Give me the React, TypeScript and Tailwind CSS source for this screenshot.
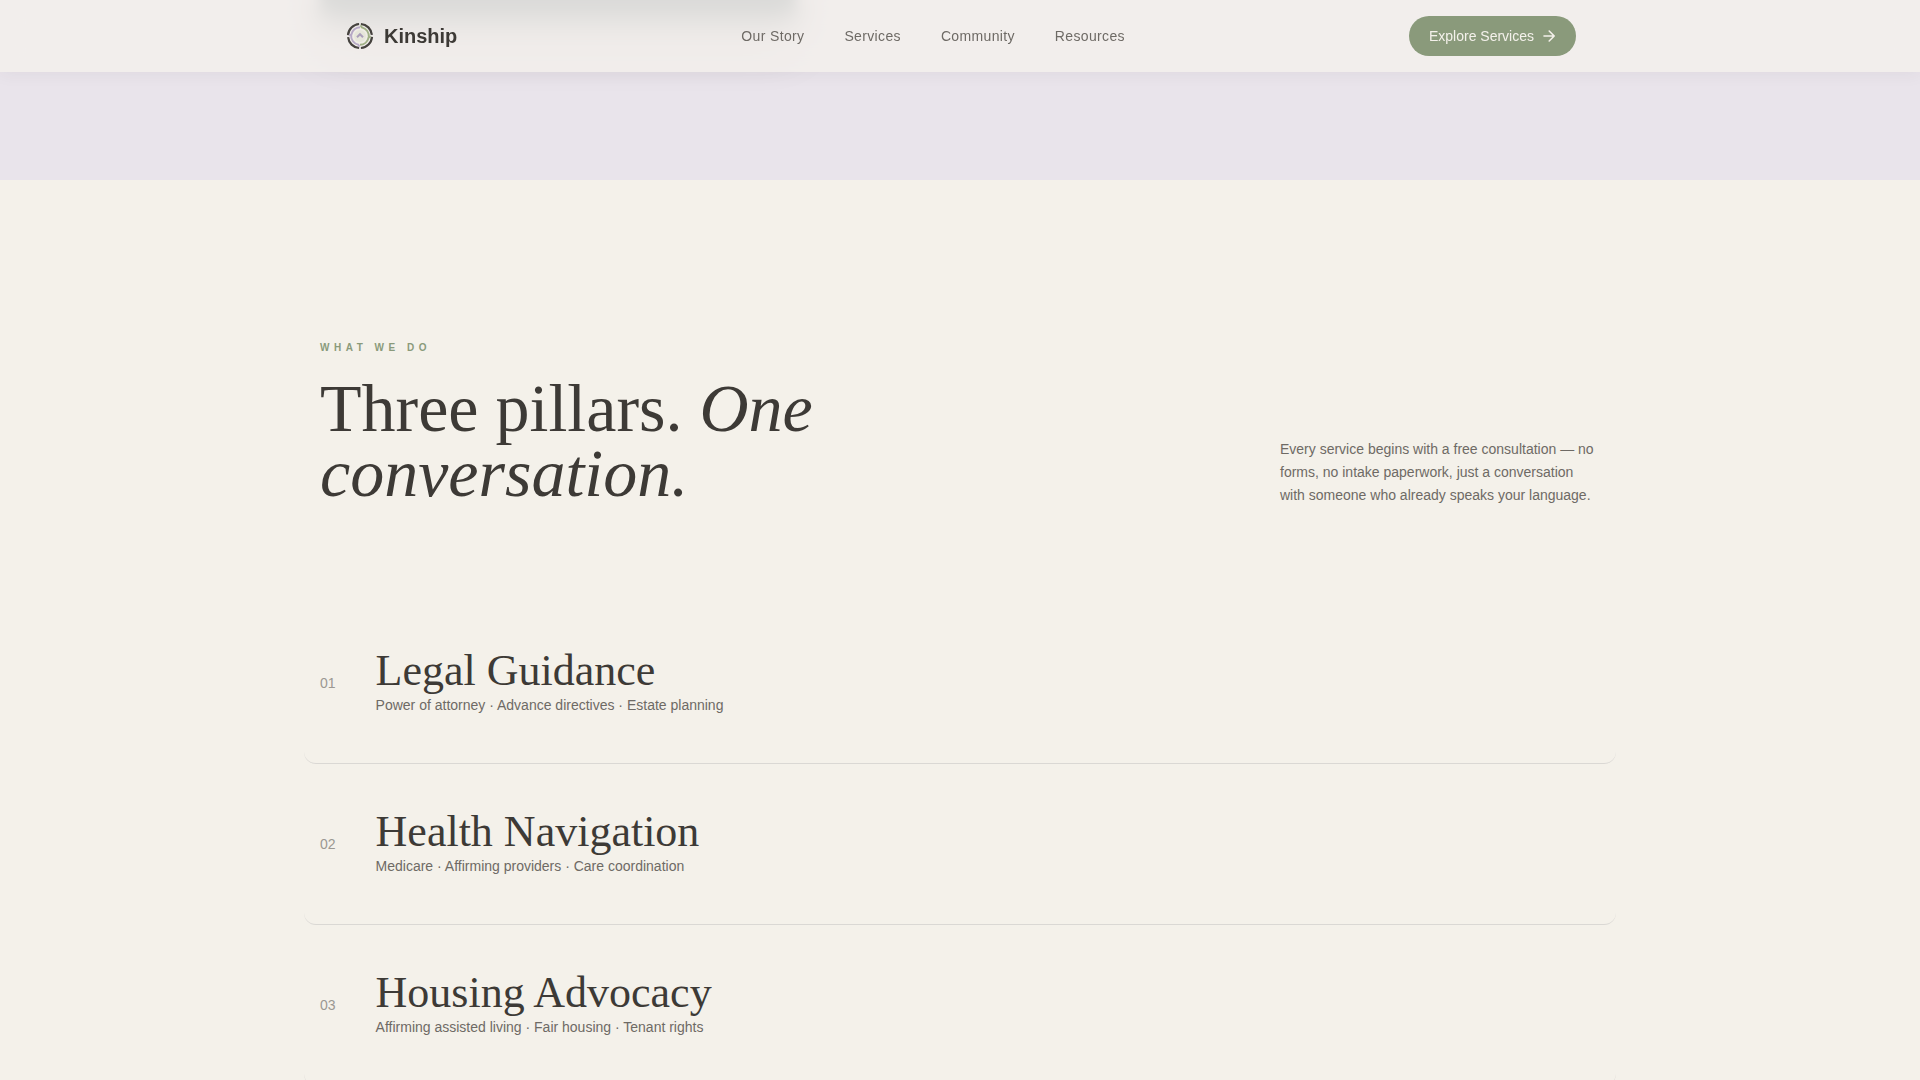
const navLinks = ['Our Story', 'Services', 'Community', 'Resources']

const services = [
  { num: '01', title: 'Legal Guidance', detail: 'Power of attorney · Advance directives · Estate planning' },
  { num: '02', title: 'Health Navigation', detail: 'Medicare · Affirming providers · Care coordination' },
  { num: '03', title: 'Housing Advocacy', detail: 'Affirming assisted living · Fair housing · Tenant rights' },
]

function Logo() {
  return (
    <svg viewBox="0 0 32 32" className="size-8" fill="none" aria-hidden="true">
      <circle cx="16" cy="16" r="10" fill="#efede5" />
      <g stroke="#45423e" strokeWidth="2.2">
        <path d="M16.9 4A12 12 0 0 1 27.9 14.8" />
        <path d="M28 16.9A12 12 0 0 1 16.9 28" />
        <path d="M15.1 28A12 12 0 0 1 4.1 17.2" />
        <path d="M4 15.1A12 12 0 0 1 15.1 4" />
      </g>
      <path d="M15.4 26.8l-1.2-2.2A9 9 0 0 1 7.2 14.6M5.2 15.6l2.3-1.3A9 9 0 0 1 16 7.2" stroke="#b7a9c6" strokeWidth="1.9" />
      <path d="M16.6 5.2l1.2 2.2A9 9 0 0 1 24.8 17.4M26.8 16.4l-2.3 1.3A9 9 0 0 1 16 24.8" stroke="#a0b086" strokeWidth="1.9" />
      <circle cx="16" cy="16" r="6" fill="#e6e6da" />
      <path d="M13 17.2l3-3 3 3" stroke="#ab9fba" strokeWidth="2" />
    </svg>
  )
}

function Arrow() {
  return (
    <svg
      viewBox="0 0 14 14"
      className="size-3.5"
      fill="none"
      stroke="currentColor"
      strokeWidth="1.6"
      strokeLinecap="round"
      strokeLinejoin="round"
      aria-hidden="true"
    >
      <path d="M2 7h10.2M7.2 2l5 5-5 5" />
    </svg>
  )
}

function Header() {
  return (
    <header className="fixed inset-x-0 top-0 z-10 bg-[#f3f0ec]/85 shadow-[0_2px_16px_rgba(61,58,54,0.06)] backdrop-blur-md">
      <div className="mx-auto flex h-18 max-w-7xl items-center justify-between px-6">
        <a href="#" className="flex items-center gap-2">
          <Logo />
          <span className="text-xl font-bold">Kinship</span>
        </a>
        <nav className="flex gap-10">
          {navLinks.map((link) => (
            <a key={link} href="#" className="text-sm tracking-wide text-[#6e6a65]">{link}</a>
          ))}
        </nav>
        <button className="flex h-10 items-center gap-2 rounded-full bg-[#8a9a7b] px-5 text-sm text-[#f4f1eb]">
          Explore Services
          <Arrow />
        </button>
      </div>
    </header>
  )
}

function ServiceRow({ num, title, detail }: { num: string; title: string; detail: string }) {
  return (
    <li className="-mx-4 flex items-center gap-10 rounded-xl border-b border-[#dad8d4] px-4 py-12">
      <span className="text-sm text-[#9b9892]">{num}</span>
      <div>
        <h3 className="font-['Liberation_Serif',serif] text-[44px] leading-10">{title}</h3>
        <p className="mt-1 text-sm text-[#6e6a65]">{detail}</p>
      </div>
    </li>
  )
}

export default function App() {
  return (
    <div className="h-screen overflow-hidden bg-[#f4f1ea] font-['Liberation_Sans',Arial,sans-serif] text-[#3d3a36]">
      <Header />

      {/* tail end of the previous section, its card slides under the header */}
      <section className="h-45 overflow-hidden bg-[#e9e4eb]">
        <div className="mx-auto max-w-7xl">
          <div className="-mt-12 h-17 w-119 bg-[#4c6068] shadow-[0_24px_48px_rgba(61,58,54,0.18)] blur-[6px]" />
        </div>
      </section>

      <section className="mx-auto max-w-7xl pt-40">
        <div className="flex items-end justify-between">
          <div className="max-w-xl pb-px">
            <p className="text-[10px] leading-[15px] font-bold tracking-[0.45em] text-[#8a9a7b]">WHAT WE DO</p>
            <h2 className="mt-[21px] font-['Liberation_Serif',serif] text-[68px] leading-[65px]">
              Three pillars. <em>One conversation.</em>
            </h2>
          </div>
          <p className="max-w-xs text-sm leading-[23px] text-[#6e6a65]">
            Every service begins with a free consultation — no forms, no intake paperwork, just a conversation with
            someone who already speaks your language.
          </p>
        </div>

        <ul className="mt-24">
          {services.map((s) => (
            <ServiceRow key={s.num} {...s} />
          ))}
        </ul>
      </section>
    </div>
  )
}
